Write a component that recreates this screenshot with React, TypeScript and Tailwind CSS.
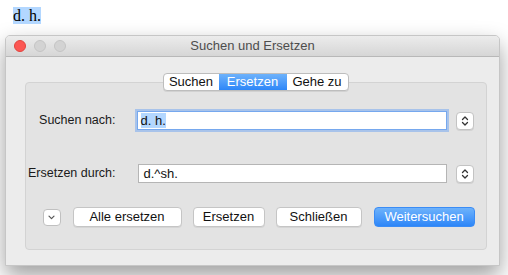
import React from 'react';

const font = { fontFamily: '"Liberation Sans", Arial, sans-serif' };

function Stepper() {
  return (
    <button
      type="button"
      className="flex h-[18px] w-[18px] shrink-0 items-center justify-center rounded-[4px] border border-[#c3c3c3] bg-white shadow-[0_1px_0_rgba(0,0,0,0.08)]"
    >
      <svg width="8" height="12" viewBox="0 0 8 12" fill="none" stroke="#333" strokeWidth="1.3" strokeLinecap="round" strokeLinejoin="round">
        <path d="M1.5 4.5 L4 2 L6.5 4.5" />
        <path d="M1.5 7.5 L4 10 L6.5 7.5" />
      </svg>
    </button>
  );
}

function PushButton({ label, width }: { label: string; width: string }) {
  return (
    <button
      type="button"
      className={`${width} flex h-[20px] items-center justify-center rounded-[4px] border border-[#c5c5c5] bg-white text-[13px] text-[#111] shadow-[0_1px_0_rgba(0,0,0,0.06)]`}
    >
      {label}
    </button>
  );
}

export default function App() {
  return (
    <div className="h-[275px] w-[508px] overflow-hidden bg-white" style={font}>
      <div className="pl-[13px] pt-[4px] h-[35px]">
        <span
          className="bg-[#b3d7ff] text-[16px] leading-[18px] text-black"
          style={{ fontFamily: '"Liberation Serif", "Times New Roman", serif' }}
        >
          d. h.
        </span>
      </div>

      <div className="ml-[5px] flex h-[231px] w-[495px] flex-col overflow-hidden rounded-t-[5px] border border-[#c6c6c6] bg-[#ececec] shadow-[0_10px_22px_rgba(0,0,0,0.38)]">
        {/* title bar */}
        <div className="relative flex h-[21px] shrink-0 items-center justify-center border-b border-[#b8b8b8] bg-gradient-to-b from-[#ececec] to-[#d6d6d6]">
          <div className="absolute left-[8px] top-[4px] flex gap-[8px]">
            <span className="h-[12px] w-[12px] rounded-full border border-[#e0443e] bg-[#fc5753]" />
            <span className="h-[12px] w-[12px] rounded-full border border-[#c4c4c4] bg-[#d3d3d3]" />
            <span className="h-[12px] w-[12px] rounded-full border border-[#c4c4c4] bg-[#d3d3d3]" />
          </div>
          <span className="text-[13px] text-[#4d4d4d]">Suchen und Ersetzen</span>
        </div>

        {/* body */}
        <div className="flex flex-col items-center pl-[19px] pr-[13px] pt-[16px]">
          <div className="relative z-10 flex h-[18px] overflow-hidden rounded-[4px] border border-[#bdbdbd] bg-white text-[13px] shadow-[0_1px_0_rgba(0,0,0,0.08)]">
            <div className="flex w-[55px] items-center justify-center text-[#111]">Suchen</div>
            <div className="flex w-[68px] items-center justify-center bg-gradient-to-b from-[#6db2fb] to-[#2c86f8] text-white">Ersetzen</div>
            <div className="flex w-[61px] items-center justify-center text-[#111]">Gehe zu</div>
          </div>

          <div className="-mt-[9px] flex h-[168px] w-[462px] flex-col rounded-[4px] border border-[#d3d3d3] bg-[#e3e3e3] pt-[28px]">
            <div className="flex h-[19px] items-center">
              <div className="w-[90px] text-right text-[12.5px] text-[#1a1a1a]">Suchen nach:</div>
              <div className="ml-[21px] flex h-[19px] w-[310px] items-center border border-[#76a8ee] bg-white pl-[3px] shadow-[0_0_0_2px_rgba(120,170,240,0.55)]">
                <span className="bg-[#b3d7ff] text-[13px] leading-[15px] text-[#111]">d. h.</span>
              </div>
              <div className="ml-[9px]">
                <Stepper />
              </div>
            </div>

            <div className="mt-[34px] flex h-[19px] items-center">
              <div className="w-[90px] text-right text-[12.5px] text-[#1a1a1a]">Ersetzen durch:</div>
              <div className="ml-[22px] flex h-[19px] w-[309px] items-center border border-[#b5b5b5] bg-white pl-[5px] text-[13px] text-[#111]">
                d.^sh.
              </div>
              <div className="ml-[9px]">
                <Stepper />
              </div>
            </div>

            <div className="mt-[24px] flex items-center pl-[17px]">
              <button
                type="button"
                className="flex h-[17px] w-[18px] items-center justify-center rounded-[4px] border border-[#c0c0c0] bg-white"
              >
                <svg width="7" height="5" viewBox="0 0 7 5" fill="none" stroke="#555" strokeWidth="1.2" strokeLinecap="round" strokeLinejoin="round">
                  <path d="M1 1.2 L3.5 3.7 L6 1.2" />
                </svg>
              </button>
              <div className="ml-[12px] flex gap-[11px]">
                <PushButton label="Alle ersetzen" width="w-[109px]" />
                <PushButton label="Ersetzen" width="w-[72px]" />
                <PushButton label="Schließen" width="w-[86px]" />
              </div>
              <button
                type="button"
                className="ml-[12px] flex h-[20px] w-[101px] items-center justify-center rounded-[4px] border border-[#3b8cf5] bg-gradient-to-b from-[#6db2fb] to-[#2c86f8] text-[13px] text-white"
              >
                Weitersuchen
              </button>
            </div>
          </div>
        </div>
      </div>
    </div>
  );
}
